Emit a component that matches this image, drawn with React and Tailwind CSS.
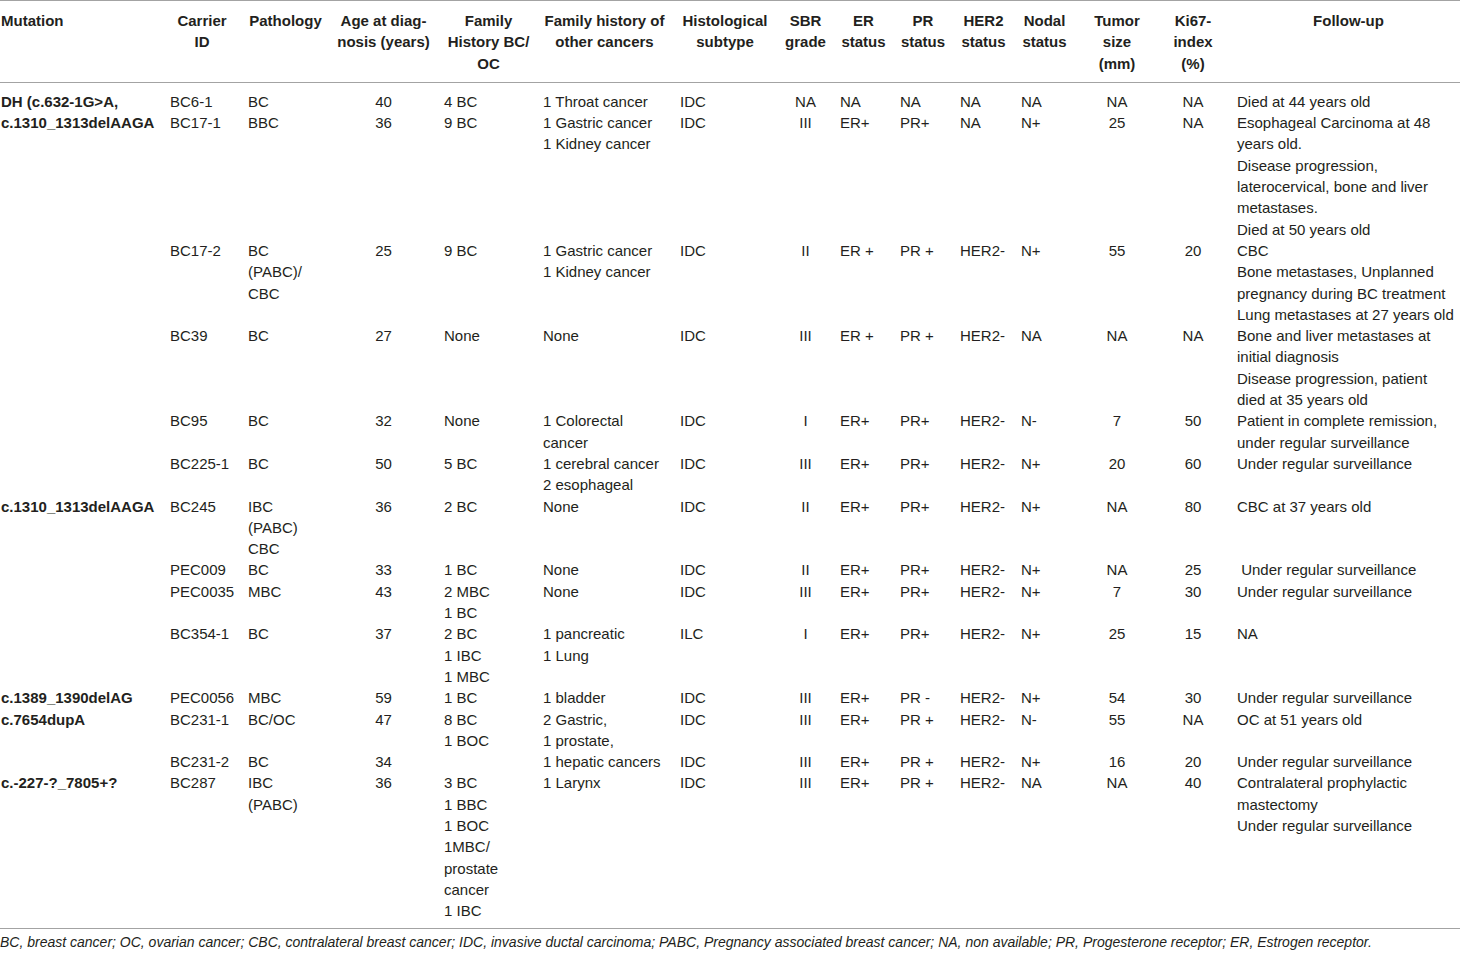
import React from "react";

const cols = [
  { w: "w-[170px]", h: "text-left pl-[1px]", d: "text-left pl-[1px] font-bold" },
  { w: "w-[78px]", h: "text-center pr-[14px]", d: "text-left pr-[14px]" },
  { w: "w-[89px]", h: "text-center pr-[14px]", d: "text-left pr-[14px]" },
  { w: "w-[107px]", h: "text-center pr-[14px]", d: "text-center pr-[14px]" },
  { w: "w-[99px]", h: "text-center pr-[10px]", d: "text-left pr-[10px]" },
  { w: "w-[137px]", h: "text-center pr-[14px]", d: "text-left pr-[14px]" },
  { w: "w-[104px]", h: "text-center pr-[14px]", d: "text-left pr-[14px]" },
  { w: "w-[56px]", h: "text-center pr-[13px]", d: "text-center pr-[13px]" },
  { w: "w-[60px]", h: "text-center pr-[13px]", d: "text-left pr-[13px]" },
  { w: "w-[60px]", h: "text-center pr-[14px]", d: "text-left pr-[14px]" },
  { w: "w-[61px]", h: "text-center pr-[14px]", d: "text-left pr-[14px]" },
  { w: "w-[61px]", h: "text-center pr-[14px]", d: "text-left pr-[14px]" },
  { w: "w-[78px]", h: "text-center pr-[8px]", d: "text-center pr-[8px]" },
  { w: "w-[77px]", h: "text-center pr-[11px]", d: "text-center pr-[11px]" },
  { w: "w-[223px]", h: "text-center", d: "text-left" },
];

const header = [
  ["Mutation"],
  ["Carrier", "ID"],
  ["Pathology"],
  ["Age at diag-", "nosis (years)"],
  ["Family", "History BC/", "OC"],
  ["Family history of", "other cancers"],
  ["Histological", "subtype"],
  ["SBR", "grade"],
  ["ER", "status"],
  ["PR", "status"],
  ["HER2", "status"],
  ["Nodal", "status"],
  ["Tumor", "size", "(mm)"],
  ["Ki67-", "index", "(%)"],
  ["Follow-up"],
];

const rows = [
  ["DH (c.632-1G>A,", "BC6-1", "BC", "40", "4 BC", "1 Throat cancer", "IDC", "NA", "NA", "NA", "NA", "NA", "NA", "NA", "Died at 44 years old"],
  ["c.1310_1313delAAGA", "BC17-1", "BBC", "36", "9 BC", ["1 Gastric cancer", "1 Kidney cancer"], "IDC", "III", "ER+", "PR+", "NA", "N+", "25", "NA",
    ["Esophageal Carcinoma at 48", "years old.", "Disease progression,", "laterocervical, bone and liver", "metastases.", "Died at 50 years old"]],
  ["", "BC17-2", ["BC", "(PABC)/", "CBC"], "25", "9 BC", ["1 Gastric cancer", "1 Kidney cancer"], "IDC", "II", "ER +", "PR +", "HER2-", "N+", "55", "20",
    ["CBC", "Bone metastases, Unplanned", "pregnancy during BC treatment", "Lung metastases at 27 years old"]],
  ["", "BC39", "BC", "27", "None", "None", "IDC", "III", "ER +", "PR +", "HER2-", "NA", "NA", "NA",
    ["Bone and liver metastases at", "initial diagnosis", "Disease progression, patient", "died at 35 years old"]],
  ["", "BC95", "BC", "32", "None", ["1 Colorectal", "cancer"], "IDC", "I", "ER+", "PR+", "HER2-", "N-", "7", "50",
    ["Patient in complete remission,", "under regular surveillance"]],
  ["", "BC225-1", "BC", "50", "5 BC", ["1 cerebral cancer", "2 esophageal"], "IDC", "III", "ER+", "PR+", "HER2-", "N+", "20", "60", "Under regular surveillance"],
  ["c.1310_1313delAAGA", "BC245", ["IBC", "(PABC)", "CBC"], "36", "2 BC", "None", "IDC", "II", "ER+", "PR+", "HER2-", "N+", "NA", "80", "CBC at 37 years old"],
  ["", "PEC009", "BC", "33", "1 BC", "None", "IDC", "II", "ER+", "PR+", "HER2-", "N+", "NA", "25", "\u00a0Under regular surveillance"],
  ["", "PEC0035", "MBC", "43", ["2 MBC", "1 BC"], "None", "IDC", "III", "ER+", "PR+", "HER2-", "N+", "7", "30", "Under regular surveillance"],
  ["", "BC354-1", "BC", "37", ["2 BC", "1 IBC", "1 MBC"], ["1 pancreatic", "1 Lung"], "ILC", "I", "ER+", "PR+", "HER2-", "N+", "25", "15", "NA"],
  ["c.1389_1390delAG", "PEC0056", "MBC", "59", "1 BC", "1 bladder", "IDC", "III", "ER+", "PR -", "HER2-", "N+", "54", "30", "Under regular surveillance"],
  ["c.7654dupA", "BC231-1", "BC/OC", "47", ["8 BC", "1 BOC"], ["2 Gastric,", "1 prostate,"], "IDC", "III", "ER+", "PR +", "HER2-", "N-", "55", "NA", "OC at 51 years old"],
  ["", "BC231-2", "BC", "34", "", "1 hepatic cancers", "IDC", "III", "ER+", "PR +", "HER2-", "N+", "16", "20", "Under regular surveillance"],
  ["c.-227-?_7805+?", "BC287", ["IBC", "(PABC)"], "36", ["3 BC", "1 BBC", "1 BOC", "1MBC/", "prostate", "cancer", "1 IBC"], "1 Larynx", "IDC", "III", "ER+", "PR +", "HER2-", "NA", "NA", "40",
    ["Contralateral prophylactic", "mastectomy", "Under regular surveillance"]],
];

function Lines({ v }) {
  const arr = Array.isArray(v) ? v : [v];
  return arr.map((l, i) => (
    <div key={i} className="whitespace-nowrap">
      {l === "" ? "\u00a0" : l}
    </div>
  ));
}

export default function App() {
  return (
    <div
      className="w-[1460px] h-[953px] bg-white text-[#231f20] overflow-hidden"
      style={{ fontFamily: '"Liberation Sans", Arial, sans-serif' }}
    >
      <table className="table-fixed border-collapse w-[1460px] text-[15px] leading-[21.3px]">
        <colgroup>
          {cols.map((c, i) => (
            <col key={i} className={c.w} />
          ))}
        </colgroup>
        <thead>
          <tr className="border-t border-b border-[#a3a3a3]">
            {header.map((h, i) => (
              <th key={i} className={`${cols[i].h} align-top font-bold pt-[9px] pb-[8px]`}>
                <Lines v={h} />
              </th>
            ))}
          </tr>
        </thead>
        <tbody>
          {rows.map((r, ri) => (
            <tr key={ri}>
              {r.map((v, ci) => (
                <td
                  key={ci}
                  className={`${cols[ci].d} align-top ${ri === 0 ? "pt-[8px]" : ""} ${
                    ri === rows.length - 1 ? "pb-[7px]" : ""
                  }`}
                >
                  {v === "" ? null : <Lines v={v} />}
                </td>
              ))}
            </tr>
          ))}
        </tbody>
      </table>
      <div className="border-t border-[#a3a3a3] pt-[3px] text-[14px] italic leading-[21px] whitespace-nowrap">
        BC, breast cancer; OC, ovarian cancer; CBC, contralateral breast cancer; IDC, invasive ductal carcinoma; PABC, Pregnancy associated breast cancer; NA, non available; PR, Progesterone receptor; ER, Estrogen receptor.
      </div>
    </div>
  );
}
